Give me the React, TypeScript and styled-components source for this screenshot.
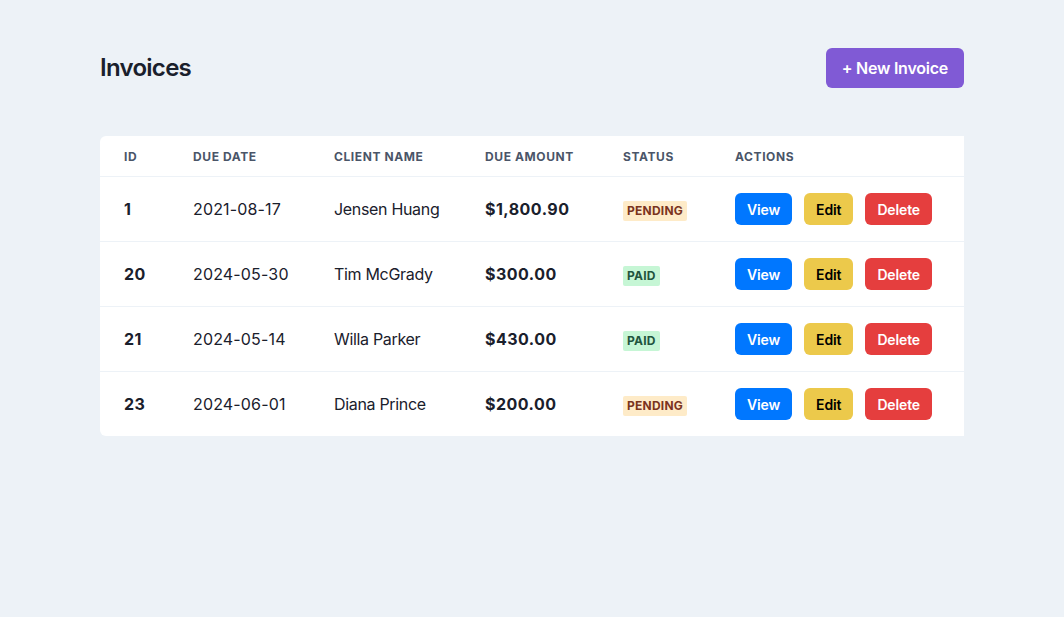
import React from "react";
import styled, { createGlobalStyle } from "styled-components";

const GlobalStyle = createGlobalStyle`
  html, body { margin: 0; padding: 0; }
  body {
    background: #EDF2F7;
    font-family: Inter, "Noto Sans", sans-serif;
    color: #1A202C;
    -webkit-font-smoothing: antialiased;
  }
  * { box-sizing: border-box; }
`;

const Page = styled.div`
  min-height: 617px;
  padding: 48px 100px;
  display: flex;
  flex-direction: column;
  gap: 48px;
`;

const Header = styled.div`
  display: flex;
  align-items: center;
  justify-content: space-between;
`;

const Title = styled.h1`
  margin: 0;
  font-size: 24px;
  line-height: 30px;
  font-weight: 600;
  letter-spacing: -0.03em;
  color: #1A202C;
`;

const PrimaryButton = styled.button`
  height: 40px;
  padding: 0 16px;
  border: none;
  border-radius: 6px;
  background: #805AD5;
  color: #fff;
  font-family: inherit;
  font-size: 16px;
  font-weight: 600;
  letter-spacing: -0.015em;
  cursor: pointer;
`;

const TableWrap = styled.div`
  overflow: hidden;
`;

const Table = styled.table`
  width: 880px;
  border-collapse: collapse;
  background: #fff;
  border-radius: 6px;
  overflow: hidden;
  table-layout: fixed;
`;

const Th = styled.th<{ $w?: number }>`
  ${(p) => (p.$w ? `width: ${p.$w}px;` : "")}
  text-align: left;
  padding: 13px 24px 11px;
  font-size: 12px;
  line-height: 16px;
  font-weight: 700;
  letter-spacing: 0.05em;
  text-transform: uppercase;
  color: #4A5568;
  border-bottom: 1px solid #EDF2F7;
  white-space: nowrap;
`;

const Tr = styled.tr<{ $last?: boolean }>`
  td { border-bottom: ${(p) => (p.$last ? "none" : "1px solid #EDF2F7")}; }
`;

const Td = styled.td<{ $bold?: boolean; $num?: boolean }>`
  padding: 16px 24px;
  height: 64px;
  font-size: 16px;
  line-height: 24px;
  font-weight: ${(p) => (p.$bold ? 700 : 400)};
  letter-spacing: ${(p) => (p.$num ? (p.$bold ? "0.03em" : "0.01em") : "-0.02em")};
  color: #1A202C;
  white-space: nowrap;
  vertical-align: middle;
`;

const Badge = styled.span<{ $status: "paid" | "pending" }>`
  display: inline-block;
  padding: 0 4px;
  font-size: 12px;
  line-height: 20px;
  font-weight: 700;
  letter-spacing: 0.02em;
  text-transform: uppercase;
  border-radius: 2px;
  background: ${(p) => (p.$status === "paid" ? "#C6F6D5" : "#FEEBC8")};
  color: ${(p) => (p.$status === "paid" ? "#22543D" : "#7B341E")};
  vertical-align: middle;
`;

const Actions = styled.div`
  display: flex;
  gap: 12px;
`;

const ActionButton = styled.button<{ $variant: "view" | "edit" | "delete" }>`
  height: 32px;
  padding: 0 12px;
  border: none;
  border-radius: 6px;
  font-family: inherit;
  font-size: 14px;
  font-weight: 600;
  letter-spacing: -0.01em;
  cursor: pointer;
  background: ${(p) =>
    p.$variant === "view" ? "#0077FF" : p.$variant === "edit" ? "#ECC94B" : "#E53E3E"};
  color: ${(p) => (p.$variant === "edit" ? "#000" : "#fff")};
`;

type Invoice = {
  id: number;
  due: string;
  client: string;
  amount: string;
  status: "paid" | "pending";
};

const invoices: Invoice[] = [
  { id: 1, due: "2021-08-17", client: "Jensen Huang", amount: "$1,800.90", status: "pending" },
  { id: 20, due: "2024-05-30", client: "Tim McGrady", amount: "$300.00", status: "paid" },
  { id: 21, due: "2024-05-14", client: "Willa Parker", amount: "$430.00", status: "paid" },
  { id: 23, due: "2024-06-01", client: "Diana Prince", amount: "$200.00", status: "pending" },
];

export default function App() {
  return (
    <>
      <GlobalStyle />
      <Page>
        <Header>
          <Title>Invoices</Title>
          <PrimaryButton>+ New Invoice</PrimaryButton>
        </Header>
        <TableWrap>
          <Table>
            <thead>
              <tr>
                <Th $w={69}>ID</Th>
                <Th $w={141}>Due Date</Th>
                <Th $w={151}>Client Name</Th>
                <Th $w={138}>Due Amount</Th>
                <Th $w={112}>Status</Th>
                <Th>Actions</Th>
              </tr>
            </thead>
            <tbody>
              {invoices.map((inv, i) => (
                <Tr key={inv.id} $last={i === invoices.length - 1}>
                  <Td $bold $num>{inv.id}</Td>
                  <Td $num>{inv.due}</Td>
                  <Td>{inv.client}</Td>
                  <Td $bold $num>{inv.amount}</Td>
                  <Td>
                    <Badge $status={inv.status}>{inv.status}</Badge>
                  </Td>
                  <Td>
                    <Actions>
                      <ActionButton $variant="view">View</ActionButton>
                      <ActionButton $variant="edit">Edit</ActionButton>
                      <ActionButton $variant="delete">Delete</ActionButton>
                    </Actions>
                  </Td>
                </Tr>
              ))}
            </tbody>
          </Table>
        </TableWrap>
      </Page>
    </>
  );
}
